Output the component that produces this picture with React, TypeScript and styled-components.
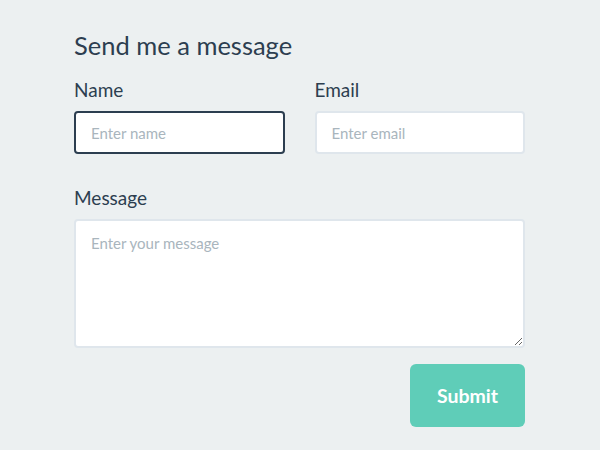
import React from "react";
import styled, { createGlobalStyle } from "styled-components";

const GlobalStyle = createGlobalStyle`
  body {
    margin: 0;
    background: #ecf0f1;
    font-family: Lato, "Open Sans", sans-serif;
    color: #2c3e50;
  }
`;

function App() {
  return (
    <>
      <GlobalStyle />
      <Page>
        <Form onSubmit={(e) => e.preventDefault()}>
          <Title>Send me a message</Title>
          <Row>
            <Field>
              <Label htmlFor="name">Name</Label>
              <Input id="name" placeholder="Enter name" className="focused" />
            </Field>
            <Field>
              <Label htmlFor="email">Email</Label>
              <Input id="email" placeholder="Enter email" />
            </Field>
          </Row>
          <Field>
            <Label htmlFor="message">Message</Label>
            <TextArea id="message" placeholder="Enter your message" />
          </Field>
          <Actions>
            <SubmitButton type="submit">Submit</SubmitButton>
          </Actions>
        </Form>
      </Page>
    </>
  );
}

const Page = styled.div`
  padding: 30px 0 0 74px;
`;
const Form = styled.form`
  width: 451px;
  display: flex;
  flex-direction: column;
`;
const Title = styled.h1`
  margin: 0 0 19px;
  font-size: 25.5px;
  font-weight: 400;
  line-height: 30px;
`;
const Row = styled.div`
  display: grid;
  grid-template-columns: 1fr 1fr;
  column-gap: 30px;
  margin-bottom: 33px;
`;
const Field = styled.div`
  display: flex;
  flex-direction: column;
`;
const Label = styled.label`
  font-size: 19px;
  line-height: 22px;
  margin-bottom: 10px;
`;
const Input = styled.input`
  box-sizing: border-box;
  height: 43px;
  width: 100%;
  padding: 0 15px;
  border: 2px solid #dfe6ec;
  border-radius: 4px;
  background: #fff;
  font-family: inherit;
  font-size: 15px;
  color: #2c3e50;
  outline: none;
  &::placeholder {
    color: #a9b5bd;
  }
  &.focused {
    border-color: #2c3e50;
  }
`;
const TextArea = styled.textarea`
  box-sizing: border-box;
  height: 129px;
  width: 100%;
  padding: 13px 15px;
  border: 2px solid #dfe6ec;
  border-radius: 4px;
  background: #fff;
  font-family: inherit;
  font-size: 15px;
  color: #2c3e50;
  outline: none;
  resize: vertical;
  &::placeholder {
    color: #a9b5bd;
  }
`;
const Actions = styled.div`
  display: flex;
  justify-content: flex-end;
  margin-top: 16px;
`;
const SubmitButton = styled.button`
  width: 115px;
  height: 63px;
  border: none;
  border-radius: 6px;
  background: #5fcdb8;
  color: #fff;
  font-family: inherit;
  font-size: 19.5px;
  font-weight: 700;
  cursor: pointer;
`;

export default App;
